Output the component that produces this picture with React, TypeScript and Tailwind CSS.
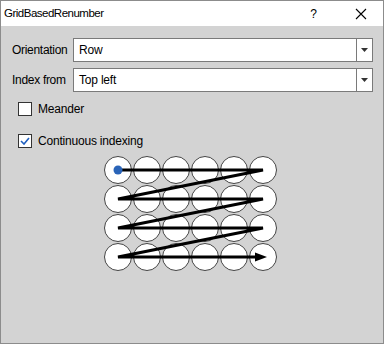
const COLS = 6
const ROWS = 4
const STEP = 29

function ComboBox({ value }: { value: string }) {
  return (
    <div className="flex h-[24px] flex-1 border border-[#7a7a7a] bg-white">
      <div className="flex flex-1 items-center pl-[5px] text-[12px] tracking-[-0.2px] text-black">{value}</div>
      <div className="flex w-[16px] items-center justify-center border-l border-[#7a7a7a]">
        <svg width="7" height="4" viewBox="0 0 7 4">
          <path d="M0 0h7L3.5 4z" fill="#333" />
        </svg>
      </div>
    </div>
  )
}

function CheckRow({ label, checked }: { label: string; checked?: boolean }) {
  return (
    <div className="flex h-[14px] items-center gap-[6px]">
      <div className="flex h-[14px] w-[14px] items-center justify-center border border-[#333] bg-white">
        {checked && (
          <svg width="10" height="8" viewBox="0 0 10 8">
            <path d="M1 4l3 3 5-6" stroke="#1f5fbf" strokeWidth="1.6" fill="none" />
          </svg>
        )}
      </div>
      <span className="text-[12px] leading-[14px] tracking-[-0.2px] text-black">{label}</span>
    </div>
  )
}

function GridPicture() {
  const cx = (i: number) => 14 + i * STEP
  const cy = (j: number) => 14 + j * STEP
  const pts: string[] = []
  for (let j = 0; j < ROWS; j++) {
    pts.push(`${cx(0)},${cy(j)}`, `${cx(COLS - 1)},${cy(j)}`)
  }
  return (
    <svg width="176" height="117" viewBox="0 0 176 117">
      {Array.from({ length: ROWS }).map((_, j) =>
        Array.from({ length: COLS }).map((_, i) => (
          <circle key={`${i}-${j}`} cx={cx(i)} cy={cy(j)} r="13.5" fill="#fff" stroke="#444" strokeWidth="1" />
        )),
      )}
      <polyline points={pts.slice(0, -1).join(" ") + ` ${cx(COLS - 1) - 6},${cy(ROWS - 1)}`} fill="none" stroke="#000" strokeWidth="3" />
      <path d={`M${cx(COLS - 1) - 8} ${cy(ROWS - 1) - 4.5}L${cx(COLS - 1) + 4} ${cy(ROWS - 1)}L${cx(COLS - 1) - 8} ${cy(ROWS - 1) + 4.5}z`} fill="#000" />
      <circle cx={cx(0)} cy={cy(0)} r="4.5" fill="#2a64b8" />
    </svg>
  )
}

export default function App() {
  return (
    <div className="flex h-[344px] w-[384px] flex-col border border-[#8c8c8c] bg-[#d3d3d3] font-['Liberation_Sans',sans-serif]">
      <div className="flex h-[25px] items-center bg-white pl-[3px] text-black">
        <span className="flex-1 text-[11.5px] tracking-[-0.5px]">GridBasedRenumber</span>
        <span className="mr-[38px] text-[12px]">?</span>
        <svg className="mr-[16px]" width="12" height="12" viewBox="0 0 12 12">
          <path d="M1 1l10 10M11 1L1 11" stroke="#000" strokeWidth="1.1" />
        </svg>
      </div>
      <div className="flex flex-col pl-[11px] pr-[10px] pt-[12px]">
        <div className="flex flex-col gap-[6px]">
          <div className="flex items-center">
            <span className="w-[61px] text-[12px] tracking-[-0.3px] text-black">Orientation</span>
            <ComboBox value="Row" />
          </div>
          <div className="flex items-center">
            <span className="w-[61px] text-[12px] tracking-[-0.3px] text-black">Index from</span>
            <ComboBox value="Top left" />
          </div>
        </div>
        <div className="mt-[10px] flex flex-col gap-[18px] pl-[6px]">
          <CheckRow label="Meander" />
          <CheckRow label="Continuous indexing" checked />
        </div>
        <div className="mt-[8px] flex justify-center pr-[1px]">
          <GridPicture />
        </div>
      </div>
    </div>
  )
}
